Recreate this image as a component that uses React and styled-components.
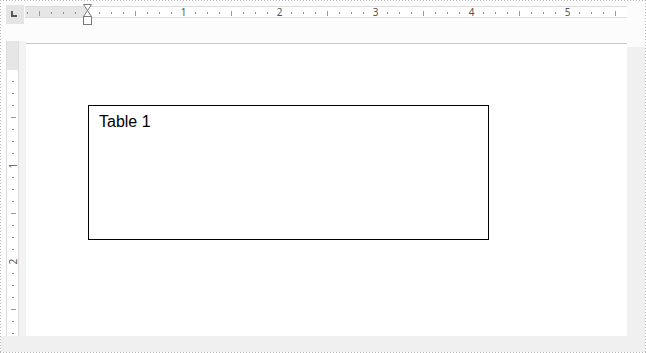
import React from 'react';
import styled, { createGlobalStyle } from 'styled-components';

const Global = createGlobalStyle`
  html, body { margin: 0; padding: 0; background: #fff; }
  body { font-family: "Liberation Sans", Arial, sans-serif; }
`;

const DOT = '#b4b4b4';

const Frame = styled.div`
  width: 646px;
  height: 353px;
  box-sizing: border-box;
  padding: 1px;
  display: flex;
  flex-direction: column;
  background:
    repeating-linear-gradient(to right, ${DOT} 0 1px, transparent 1px 3px) left top / 100% 1px no-repeat,
    repeating-linear-gradient(to right, ${DOT} 0 1px, transparent 1px 3px) left bottom / 100% 1px no-repeat,
    repeating-linear-gradient(to bottom, ${DOT} 0 1px, transparent 1px 3px) left top / 1px 100% no-repeat,
    repeating-linear-gradient(to bottom, ${DOT} 0 1px, transparent 1px 3px) right top / 1px 100% no-repeat,
    #fff;
`;

const TopBar = styled.div`
  height: 40px;
  flex: none;
  box-sizing: border-box;
  display: flex;
  align-items: flex-start;
  padding: 4px 0 0 5px;
  background: #fcfcfc;
`;

const CornerBox = styled.div`
  width: 18px;
  height: 19px;
  background: #e4e4e4;
  flex: none;
  svg { display: block; }
`;

const HRuler = styled.div`
  position: relative;
  margin: 1px 0 0 1px;
  width: 602px;
  height: 12px;
  box-sizing: border-box;
  border-top: 1px solid #dcdcdc;
  border-bottom: 1px solid #dcdcdc;
  background: linear-gradient(to right, #e6e6e6 0 62px, #fff 62px);
  svg { display: block; overflow: visible; }
`;

const IndentMarker = styled.svg`
  position: absolute;
  left: 57px;
  top: -4px;
`;

const Middle = styled.div`
  height: 295px;
  flex: none;
  display: flex;
  background: #fcfcfc;
`;

const LeftCol = styled.div`
  width: 25px;
  flex: none;
  box-sizing: border-box;
  padding-left: 5px;
  display: flex;
  background: #fff;
`;

const VRuler = styled.div`
  width: 13px;
  flex: none;
  box-sizing: border-box;
  border-left: 1px solid #dcdcdc;
  border-right: 1px solid #dcdcdc;
  background: linear-gradient(to bottom, #e6e6e6 0 29px, #fff 29px);
  svg { display: block; overflow: visible; }
`;

const VGutter = styled.div`
  flex: 1;
  background: #f3f3f3;
`;

const PageCol = styled.div`
  width: 601px;
  flex: none;
  padding-top: 2px;
  display: flex;
  flex-direction: column;
  box-sizing: border-box;
`;

const Page = styled.div`
  flex: 1;
  background: #fff;
  border-top: 1px solid #c6c6c6;
  padding: 61px 0 0 62px;
`;

const TableBox = styled.div`
  width: 401px;
  height: 135px;
  box-sizing: border-box;
  border: 1px solid #000;
  padding: 7px 10px;
  font-family: "Liberation Sans", Arial, sans-serif;
  font-size: 16px;
  line-height: 18px;
  color: #000;
`;

const RightStrip = styled.div`
  flex: 1;
  margin-top: 6px;
  background: #f0f0f0;
`;

const Bottom = styled.div`
  height: 16px;
  flex: none;
  background: #f0f0f0;
`;

const TICK = '#8f8f8f';
const NUM = '#555';
const RULER_FONT = '"Noto Sans", "DejaVu Sans", sans-serif';

function HorizontalScale() {
  const items = [];
  for (let i = -5; i <= 44; i++) {
    const x = 62 + 12 * i;
    if (i === 0) continue;
    if (i > 0 && i % 8 === 0) {
      items.push(
        <text key={i} x={x + 0.5} y={9} textAnchor="middle" fontSize="10" fill={NUM} fontFamily={RULER_FONT}>
          {i / 8}
        </text>
      );
    } else if (i % 4 === 0) {
      items.push(<rect key={i} x={x} y={4} width={1} height={5} fill="#9a9a9a" />);
    } else {
      items.push(<rect key={i} x={x} y={5} width={1} height={2} fill={TICK} />);
    }
  }
  return (
    <svg width="600" height="10" viewBox="0 0 600 10">
      {items}
    </svg>
  );
}

function VerticalScale() {
  const items = [];
  for (let i = 1; i <= 22; i++) {
    const y = 28 + 12 * i;
    if (i % 8 === 0) {
      items.push(
        <text
          key={i}
          x={5.5}
          y={y + 0.5}
          textAnchor="middle"
          dominantBaseline="central"
          fontSize="10"
          fill={NUM}
          fontFamily={RULER_FONT}
          transform={`rotate(-90 5.5 ${y + 0.5})`}
        >
          {i / 8}
        </text>
      );
    } else if (i % 4 === 0) {
      items.push(<rect key={i} x={4} y={y} width={5} height={1} fill="#9a9a9a" />);
    } else {
      items.push(<rect key={i} x={5} y={y} width={2} height={1} fill={TICK} />);
    }
  }
  return (
    <svg width="11" height="295" viewBox="0 0 11 295">
      {items}
    </svg>
  );
}

export default function App() {
  return (
    <>
      <Global />
      <Frame>
        <TopBar>
          <CornerBox>
            <svg width="18" height="19" viewBox="0 0 18 19">
              <rect x="5" y="6" width="2" height="6" fill="#555" />
              <rect x="5" y="10" width="6" height="2" fill="#555" />
            </svg>
          </CornerBox>
          <HRuler>
            <HorizontalScale />
            <IndentMarker width="11" height="24" viewBox="0 0 11 24">
              <polygon
                points="1.5,1.5 9.5,1.5 5.5,7.5 9.5,13.5 1.5,13.5 5.5,7.5"
                fill="#fff"
                stroke="#7a7a7a"
                strokeWidth="1"
              />
              <rect x="1.5" y="13.5" width="8" height="8" fill="#fff" stroke="#7a7a7a" strokeWidth="1" />
            </IndentMarker>
          </HRuler>
        </TopBar>
        <Middle>
          <LeftCol>
            <VRuler>
              <VerticalScale />
            </VRuler>
            <VGutter />
          </LeftCol>
          <PageCol>
            <Page>
              <TableBox>Table 1</TableBox>
            </Page>
          </PageCol>
          <RightStrip />
        </Middle>
        <Bottom />
      </Frame>
    </>
  );
}
